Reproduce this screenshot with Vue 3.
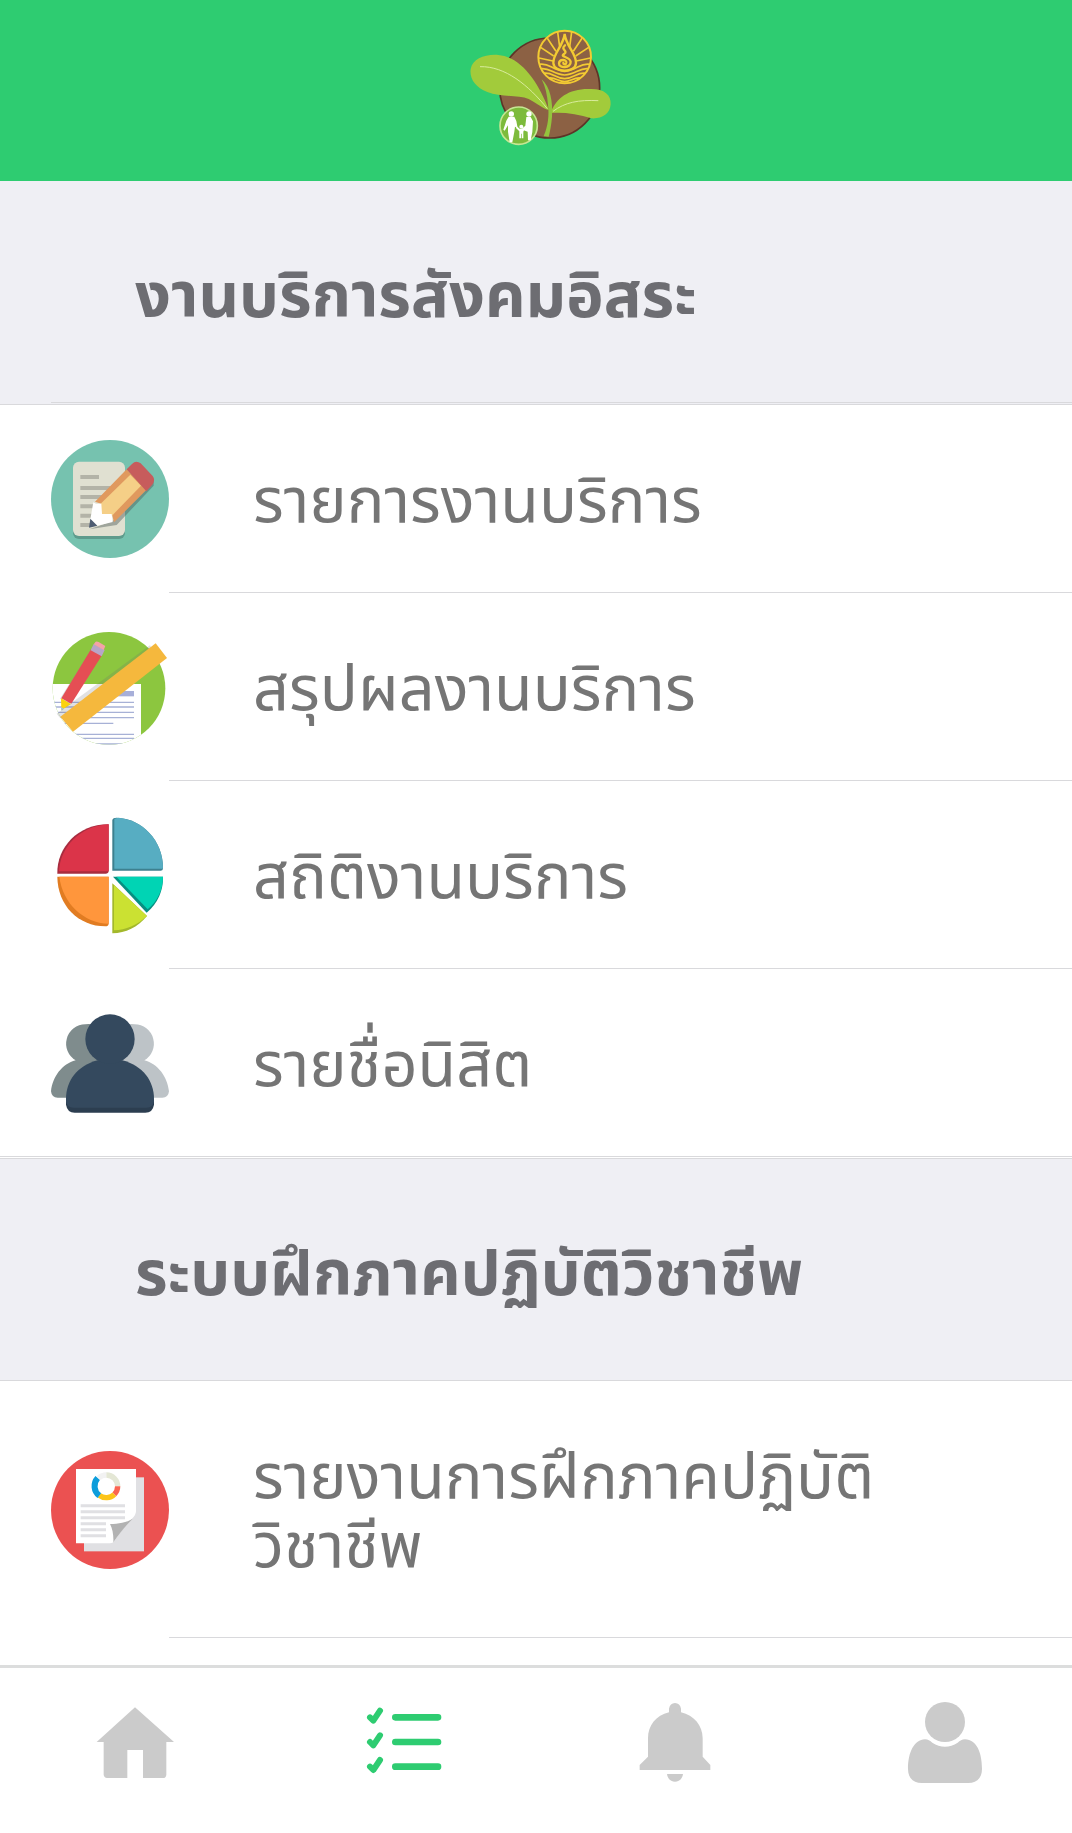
<template>
  <div class="page">
    <header class="topbar">
      <svg class="logo" viewBox="54 54 432 354" role="img" aria-label="logo">
        <circle cx="299" cy="234" r="150" fill="#8c6144" stroke="#5d3427" stroke-width="5" />
        <!-- leaves -->
        <path d="M297 300C280 298 262 280 236 267C205 254 150 262 112 246C75 231 58 205 62 177C68 146 105 132 145 135C215 142 264 216 297 300Z" fill="#a2cb3b" />
        <path d="M302 309C318 262 360 235 420 237C462 236 484 254 482 283C480 313 455 327 424 325C385 312 340 306 302 309Z" fill="#a2cb3b" />
        <path d="M275 208C301 232 309 275 306 320C304 345 300 365 296 380L281 378C294 350 298 315 294 285C292 255 286 230 275 208Z" fill="#94c43d" />
        <path d="M90 170C165 168 235 225 292 296M309 304C345 277 385 269 445 272" fill="none" stroke="#d9ec9c" stroke-width="3" />
        <!-- gold emblem -->
        <circle cx="344" cy="141" r="79" fill="#8c6144" stroke="#f3cb32" stroke-width="6" />
        <path d="M330 118L323 66M318 124L292 85M311 138L272 112M309 153L267 144M358 118L365 66M370 124L396 85M377 138L416 112M379 153L421 144" stroke="#f3cb32" stroke-width="5" />
        <path d="M344 72C340 108 309 131 310 159C312 190 377 190 378 159C379 131 348 108 344 72Z" fill="#8c6144" stroke="#f3cb32" stroke-width="7" />
        <path d="M345 106C329 119 357 123 342 132C328 141 359 139 362 155C364 175 326 176 327 160C328 147 350 147 349 158C348 165 340 163 340 159" fill="none" stroke="#f3cb32" stroke-width="7" stroke-linecap="round" />
        <path d="M268 163C298 157 306 181 344 184C382 181 390 157 420 163M273 176C300 172 310 194 344 195C378 194 388 172 415 176M281 190C305 185 315 205 344 206C373 205 383 185 407 190M296 204C315 201 325 214 344 215C363 214 373 201 392 204" fill="none" stroke="#f3cb32" stroke-width="5" />
        <!-- family badge -->
        <circle cx="206" cy="347" r="56" fill="#7dbb3c" stroke="#c6e693" stroke-width="5" />
        <g fill="#fff">
          <circle cx="184" cy="312" r="8" />
          <path d="M176 320H193L199 333L203 355L195 350L193 365L187 397H179L174 365V346L164 362L160 359L169 332Z" />
          <circle cx="237" cy="312" r="8" />
          <path d="M229 321H242L249 334L247 366L242 391H234L233 365L225 362L214 358L226 347Z" />
          <circle cx="214" cy="350" r="6" />
          <path d="M200 349L210 357H218L226 352L220 365V385H215V371H213V385H208V364L198 354Z" />
        </g>
      </svg>
    </header>

    <main class="content">
      <section v-for="group in groups" :key="group.title" class="group">
        <h2 class="group-title">{{ group.title }}</h2>
        <ul class="menu">
          <li v-for="item in group.items" :key="item.label">
            <a href="#" class="row" @click.prevent>
              <svg v-if="item.icon === 'note'" class="icon" viewBox="63 150 354 354" aria-hidden="true">
                <circle cx="240" cy="327" r="177" fill="#76c2af" />
                <rect x="129" y="224" width="156" height="223" rx="18" fill="#5e9b8c" />
                <rect x="129" y="215" width="156" height="223" rx="18" fill="#e0e0d1" />
                <path d="M151 261H207M151 294H240M151 321H220M151 349H205M151 377H195M151 405H190" stroke="#b3b3a7" stroke-width="12" />
                <path d="M178 418L260 405L371 287L371 268L248 393Z" fill="#4f5d5a" opacity=".45" />
                <path d="M195 335L290 238L349 300L252 397L246 373L216 371L216 342Z" fill="#e0995e" />
                <path d="M208 345L301 254L333 287L246 377L216 372Z" fill="#f5cf87" />
                <path d="M290 238L306 222Q318 209 332 220L368 258Q378 271 366 285L349 304Z" fill="#c75c5c" />
                <path d="M190 337L198 341H214L216 372H245L248 396L202 407L181 388Z" fill="#fff" />
                <path d="M181 386L202 407L177 413Z" fill="#4f5d73" />
              </svg>

              <svg v-else-if="item.icon === 'summary'" class="icon" viewBox="63 53 354 354" aria-hidden="true">
                <defs>
                  <clipPath id="disc"><circle cx="237" cy="234" r="169" /></clipPath>
                </defs>
                <g clip-path="url(#disc)">
                  <rect x="63" y="60" width="354" height="350" fill="#8cc63f" />
                  <rect x="60" y="221" width="273" height="190" fill="#fff" />
                  <rect x="240" y="242" width="72" height="16" fill="#a7afd9" />
                  <path d="M70 276H312M70 290H312M70 306H312M70 322H312M70 339H250M70 372H312M70 384H312M70 401H312" stroke="#a7b1d6" stroke-width="4" />
                </g>
                <path d="M183 117L206 132L111 280L90 265Z" fill="#8b8b99" opacity=".3" />
                <path d="M183 117L215 136L124 280L94 264Z" fill="#e54e54" />
                <path d="M191 101L224 119L215 138L182 120Z" fill="#b8a5c9" />
                <path d="M197 94Q201 92 206 95L226 107L221 119L191 102Z" fill="#f5a2a8" />
                <path d="M93 264L123 281L94 300Z" fill="#fbd20d" />
                <path d="M92 289L102 295L95 301Z" fill="#a5c6d8" />
                <path d="M80 310L360 105L366 115L91 324Z" fill="#6a6a70" opacity=".2" />
                <path d="M91 319L377 99L411 143L129 364Z" fill="#f5b83d" />
              </svg>

              <svg v-else-if="item.icon === 'chart'" class="icon" viewBox="63 46 354 354" aria-hidden="true">
                <path d="M236 71V211Q235 219 227 219H82C80 140 145 70 236 71Z" fill="#a82c3f" />
                <path d="M236 71V212H87C90 140 150 75 236 71Z" fill="#db3449" />
                <path d="M247 58Q249 51 260 51C335 54 400 118 399 204Q398 210 392 210H247Z" fill="#3d808f" />
                <path d="M253 56Q256 51 266 51C338 58 399 118 399 204H253Z" fill="#57adc2" />
                <path d="M82 228H236V370Q235 377 226 377C145 376 83 315 82 228Z" fill="#e17c22" />
                <path d="M88 228H236V369C160 367 98 308 88 228Z" fill="#ff963c" />
                <path d="M249 228H399C400 268 384 307 350 336Z" fill="#078e80" />
                <path d="M259 228H399C399 265 384 300 353 326Z" fill="#00d4b4" />
                <path d="M247 248L351 346C322 380 288 397 247 398Z" fill="#a3b82b" />
                <path d="M252 253L351 346C320 374 288 388 252 389Z" fill="#cbe132" />
              </svg>

              <svg v-else-if="item.icon === 'people'" class="icon" viewBox="63 40 354 354" aria-hidden="true">
                <path d="M166 101A58 58 0 0 0 137 209C96 220 68 258 63 302Q65 321 83 321H240V130Q205 96 166 101Z" fill="#7f8c8d" />
                <path d="M314 101A58 58 0 0 1 343 209C384 220 412 258 417 302Q415 321 397 321H240V130Q275 96 314 101Z" fill="#bdc3c7" />
                <path d="M108 325H372V342Q368 366 346 366H134Q112 366 108 342Z" fill="#2c3e50" />
                <path d="M203 209C142 225 108 270 108 325V332Q111 351 130 351H350Q369 351 372 332V325C372 270 338 225 277 209Z" fill="#34495e" />
                <circle cx="240" cy="145" r="74" fill="#34495e" />
              </svg>

              <svg v-else class="icon" viewBox="63 269 354 354" aria-hidden="true">
                <circle cx="240" cy="446" r="177" fill="#eb5151" />
                <rect x="162" y="348" width="180" height="222" fill="#e0e0e3" />
                <path d="M138 323H318V450C317 463 308 473 294 482L252 540Q249 546 240 546H138Z" fill="#fff" />
                <path d="M240 488C265 487 290 484 308 472C290 490 270 514 250 543C251 522 248 503 240 488Z" fill="#b2b2b2" />
                <path d="M152 433H285M152 451H285M152 469H285M152 487H228M152 505H228M152 523H228" stroke="#e0e0e3" stroke-width="9" />
                <g fill="none" stroke-width="16">
                  <path d="M206 350A34 34 0 0 1 229 341" stroke="#f2f2f2" />
                  <path d="M229 341A34 34 0 0 1 263 375" stroke="#e4e7d5" />
                  <path d="M263 375A34 34 0 0 1 253 399" stroke="#fa6450" />
                  <path d="M253 399A34 34 0 0 1 208 402" stroke="#fcc419" />
                  <path d="M208 403A36 36 0 0 1 203 350" stroke="#0d9ddb" stroke-width="18" />
                </g>
              </svg>

              <span class="label">{{ item.label }}</span>
            </a>
          </li>
        </ul>
      </section>
    </main>

    <nav class="tabbar">
      <div class="tabs">
        <button
          v-for="tab in tabs"
          :key="tab.name"
          type="button"
          class="tab"
          :class="{ active: activeTab === tab.name }"
          :aria-label="tab.title"
          @click="activeTab = tab.name"
        >
          <svg v-if="tab.name === 'home'" viewBox="75 151 300 300">
            <path d="M225 170L342 274H319V372Q318 382 309 382H249V298H202V382H141Q132 381 131 372V274H110Z" fill="currentColor" />
          </svg>
          <svg v-else-if="tab.name === 'list'" viewBox="885 151 300 300">
            <g fill="none" stroke="currentColor" stroke-linecap="round" stroke-linejoin="round">
              <path d="M1006 200H1134M1006 274H1134M1006 348H1134" stroke-width="20" />
              <path d="M930 200L940 210L960 180M930 274L940 284L960 254M930 348L940 358L960 328" stroke-width="18" />
            </g>
          </svg>
          <svg v-else-if="tab.name === 'alerts'" viewBox="195 151 300 300">
            <path d="M327 185V174Q330 158 345 157Q360 158 363 174V185C402 194 428 225 428 263V318L451 343V358H239V343L264 318V263C264 225 288 194 327 185ZM321 370H369C365 401 325 401 321 370Z" fill="currentColor" />
          </svg>
          <svg v-else viewBox="1005 151 300 300">
            <circle cx="1155" cy="214" r="60" fill="currentColor" />
            <path d="M1095 266C1104 266 1110 271 1117 276C1141 292 1169 292 1193 276C1200 271 1206 266 1215 266C1250 267 1266 306 1266 355C1266 383 1249 397 1225 397H1085C1061 397 1044 383 1044 355C1044 306 1062 267 1095 266Z" fill="currentColor" />
          </svg>
        </button>
      </div>
    </nav>
  </div>
</template>

<script setup>
import { ref } from "vue";

const activeTab = ref("list");

const groups = [
  {
    title: "งานบริการสังคมอิสระ",
    items: [
      { icon: "note", label: "รายการงานบริการ" },
      { icon: "summary", label: "สรุปผลงานบริการ" },
      { icon: "chart", label: "สถิติงานบริการ" },
      { icon: "people", label: "รายชื่อนิสิต" },
    ],
  },
  {
    title: "ระบบฝึกภาคปฏิบัติวิชาชีพ",
    items: [{ icon: "report", label: "รายงานการฝึกภาคปฏิบัติวิชาชีพ" }],
  },
];

const tabs = [
  { name: "home", title: "หน้าแรก" },
  { name: "list", title: "รายการ" },
  { name: "alerts", title: "แจ้งเตือน" },
  { name: "profile", title: "โปรไฟล์" },
];
</script>

<style>
body {
  margin: 0;
}
</style>

<style scoped>
.page {
  display: flex;
  flex-direction: column;
  height: 100vh;
  overflow: hidden;
  background: #fff;
  font-family: "Noto Sans Thai", "Noto Sans", sans-serif;
}

.topbar {
  display: flex;
  flex: none;
  justify-content: center;
  padding: 28px 0 35px 8px;
  background: #2ecc71;
}

.logo {
  width: 144px;
  height: 118px;
}

.content {
  flex: 1;
  min-height: 0;
  overflow: hidden;
}

.group {
  background: #efeff4;
}

.group-title {
  margin: 0;
  padding: 82px 84px 70px 135px;
  color: #6d6d72;
  font-size: 63px;
  font-weight: 700;
  line-height: 69px;
}

/* hairline under the title, starts at the icon column */
.group-title::after {
  content: "";
  display: block;
  height: 1px;
  margin: 70px -84px -71px -84px;
  background: #d9d9dc;
}

.menu {
  margin: 0;
  padding: 0;
  list-style: none;
  border-top: 1px solid #d9d9dc;
  background: #fff;
}

.group:first-child .menu {
  margin-top: 2px;
  border-bottom: 3px double #d9d9dc;
}

.row {
  display: flex;
  align-items: center;
  padding-left: 51px;
  color: #757575;
  text-decoration: none;
}

.icon {
  flex: none;
  width: 118px;
  height: 118px;
}

.label {
  flex: 1;
  padding: 63px 84px 55px;
  border-bottom: 1px solid #d9d9dc;
  font-size: 63px;
  line-height: 69px;
}

.group:first-child li:last-child .label {
  border-bottom: 0;
}

.tabbar {
  flex: none;
  overflow: hidden;
  border-top: 3px solid #dcdddd;
  background: #fff;
}

.tabs {
  display: flex;
  width: calc(100% + 8px);
}

.tab {
  display: flex;
  flex: 1;
  justify-content: center;
  padding: 33px 0 32px;
  border: 0;
  background: none;
  color: #cbcbcb;
}

.tab.active {
  color: #2ecc71;
}

.tab svg {
  width: 100px;
  height: 100px;
}
</style>
